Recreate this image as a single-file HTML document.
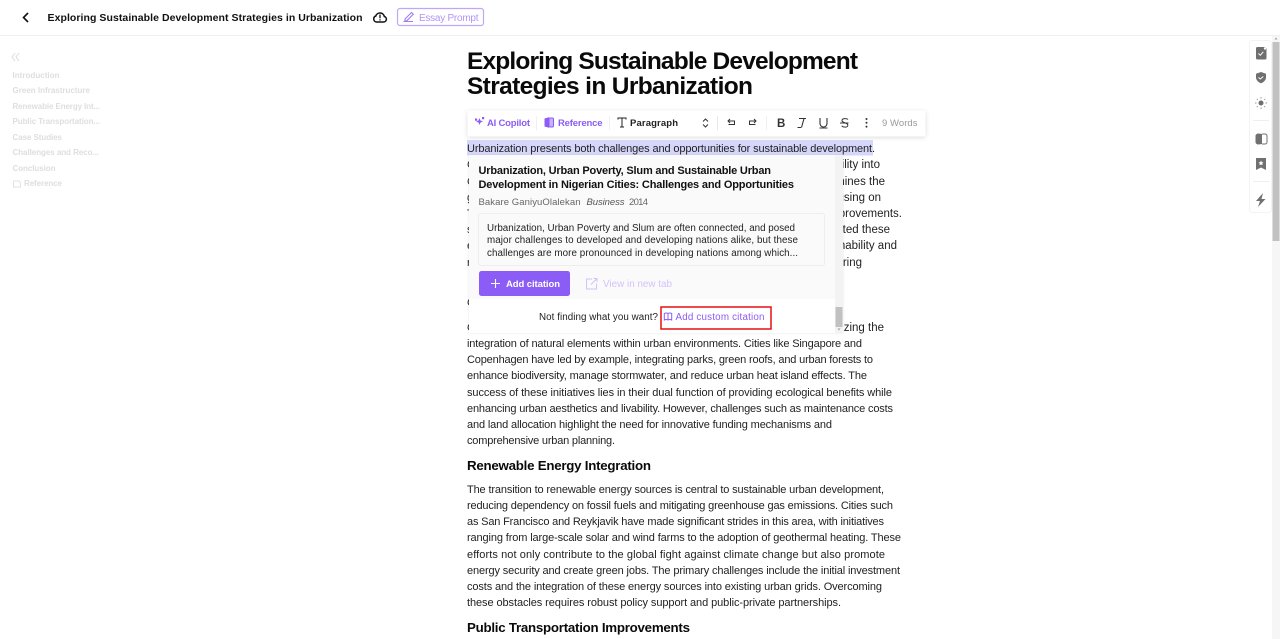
<!DOCTYPE html>
<html><head><meta charset="utf-8"><style>
html,body{margin:0;padding:0;background:#fff;overflow:hidden}
svg{display:block}
text{font-family:"Liberation Sans",sans-serif;white-space:pre}
.b{font-size:11px;fill:#1f1f1f}
.f{font-size:11.500px;fill:#1f1f1f}
.h{font-size:13.300px;font-weight:700;fill:#0a0a0a}
.t{font-size:24.500px;font-weight:700;fill:#0a0a0a}
.s{font-size:8px;font-weight:700;fill:#dedede}
.p{fill:#8b5cf6}
</style></head><body>
<svg width="1280" height="639" viewBox="0 0 1280 639" xmlns="http://www.w3.org/2000/svg">
<defs><filter id="sh" x="-10%" y="-40%" width="120%" height="200%"><feDropShadow dx="0" dy="1" stdDeviation="2.500" flood-color="#000" flood-opacity=".14"/></filter>
<filter id="sh2" x="-10%" y="-10%" width="120%" height="120%"><feDropShadow dx="0" dy="0" stdDeviation="1.200" flood-color="#000" flood-opacity=".10"/></filter></defs>
<rect width="1280" height="639" fill="#fff"/>
<rect y="35" width="1280" height="1" fill="#f0f0f0"/>
<!-- header -->
<path d="M28 13l-4.500 4.500 4.500 4.500" fill="none" stroke="#111" stroke-width="1.600"/>
<text x="47.500" y="21" font-size="10.500px" font-weight="700" fill="#111" textLength="315" lengthAdjust="spacing">Exploring Sustainable Development Strategies in Urbanization</text>
<path d="M376.500 22h7a2.800 2.800 0 0 0 .8-5.500 4.400 4.400 0 0 0-8.500-.5 3.100 3.100 0 0 0 .7 6z" fill="none" stroke="#111" stroke-width="1.500"/>
<path d="M380 14.500v3.800M380 19.200v1.300" stroke="#111" stroke-width="1.300"/>
<rect x="397.500" y="8.500" width="86" height="17" rx="2.500" fill="#fff" stroke="#bfa6fb" stroke-width="1.200"/>
<path d="M403.500 21.500h9.500M405 19l6.500-6.500 1.800 1.800-6.500 6.500h-1.800z" fill="none" stroke="#a27cf8" stroke-width="1.100"/>
<text x="419" y="21" font-size="10px" fill="#b295f9" textLength="59.500" lengthAdjust="spacing">Essay Prompt</text>
<!-- sidebar -->
<path d="M15 53l-3 4 3 4M19 53l-3 4 3 4" fill="none" stroke="#dcdcdc" stroke-width="1"/>
<text class="s" x="12.500" y="78" textLength="47" lengthAdjust="spacing">Introduction</text>
<text class="s" x="12.500" y="93" textLength="77.500" lengthAdjust="spacing">Green Infrastructure</text>
<text class="s" x="12.500" y="109" textLength="87.500" lengthAdjust="spacing">Renewable Energy Int...</text>
<text class="s" x="12.500" y="124" textLength="87.500" lengthAdjust="spacing">Public Transportation...</text>
<text class="s" x="12.500" y="140" textLength="49.500" lengthAdjust="spacing">Case Studies</text>
<text class="s" x="12.500" y="155" textLength="86.500" lengthAdjust="spacing">Challenges and Reco...</text>
<text class="s" x="12.500" y="171" textLength="43" lengthAdjust="spacing">Conclusion</text>
<path d="M14 181h5l1.500 2v4h-7v-5z" fill="none" stroke="#e2e2e2"/>
<text class="s" x="24" y="186" textLength="38" lengthAdjust="spacing">Reference</text>
<!-- title -->
<text class="t" x="467" y="69" textLength="391" lengthAdjust="spacing">Exploring Sustainable Development</text>
<text class="t" x="467" y="94" textLength="286" lengthAdjust="spacing">Strategies in Urbanization</text>
<!-- toolbar -->
<rect x="467.500" y="110.500" width="458" height="26" rx="2" fill="#fff" filter="url(#sh)"/>
<path d="M479.500 118l1 2.500 2.500 1-2.500 1-1 2.500-1-2.500-2.500-1 2.500-1zM475 118.500h2.200v2.200h-2.200zM482 117h2.200v2.200h-2.200z" class="p"/>
<text x="487" y="126" font-size="9.500px" font-weight="700" class="p" textLength="43" lengthAdjust="spacing">AI Copilot</text>
<rect x="536" y="116" width="1" height="14" fill="#f0f0f0"/>
<path d="M544.500 118.500l4.500-1.200v10.400l-4.500-1.200z" class="p"/><rect x="549" y="118" width="4.500" height="9" rx="1" fill="#c8b2fb" stroke="#8b5cf6"/>
<text x="558" y="126" font-size="9.500px" font-weight="700" class="p" textLength="44.500" lengthAdjust="spacing">Reference</text>
<rect x="609" y="116" width="1" height="14" fill="#f0f0f0"/>
<path d="M618 119.500v-1.500h8v1.500M622 118v9M620 127h4" fill="none" stroke="#222" stroke-width="1"/>
<text x="630" y="126" font-size="9.500px" font-weight="700" fill="#222" textLength="48" lengthAdjust="spacing">Paragraph</text>
<path d="M703 121.500l2.500-2.500 2.500 2.500M703 124.500l2.500 2.500 2.500-2.500" fill="none" stroke="#333" stroke-width="1"/>
<rect x="717" y="116" width="1" height="14" fill="#e8e8e8"/>
<path d="M730 119l-2 2 2 2M728 121h6.500v3.500h-6" fill="none" stroke="#333" stroke-width="1"/>
<path d="M754 119l2 2-2 2M756 121h-6.500v3.500h6" fill="none" stroke="#333" stroke-width="1"/>
<rect x="766" y="116" width="1" height="14" fill="#f0f0f0"/>
<text x="777" y="127" font-size="11.500px" font-weight="700" fill="#333" textLength="8" lengthAdjust="spacing">B</text>
<path d="M799 118.500h7M801 127.500h-3.500M805.500 118.500h-1.500l-2.500 9" fill="none" stroke="#333" stroke-width="1.100"/>
<path d="M820 118v5.500a3.400 3.400 0 0 0 7 0V118M819.500 128h8" fill="none" stroke="#333" stroke-width="1.100"/>
<path d="M848 119.500c-1-1-5.500-1.500-6 .8-.3 1.500 1.500 2 3.500 2.700 2 .7 2.700 1.500 2.200 3-.6 1.500-4.500 1.500-6-.2M840 123h8.500" fill="none" stroke="#333" stroke-width="1"/>
<circle cx="866.500" cy="119" r="1" fill="#333"/><circle cx="866.500" cy="122.800" r="1" fill="#333"/><circle cx="866.500" cy="126.600" r="1" fill="#333"/>
<text x="882" y="126" font-size="9.500px" fill="#9a9a9a" textLength="35.500" lengthAdjust="spacing">9 Words</text>
<!-- selected -->
<rect x="467" y="140" width="406" height="15.500" fill="#d6d6fb"/>
<text class="b" x="467" y="152" textLength="408" lengthAdjust="spacing">Urbanization presents both challenges and opportunities for sustainable development.</text>
<!-- left fragments / right fragments -->
<text class="b" x="467" y="168">C</text><text class="b" x="467" y="185">C</text><text class="b" x="467" y="201">g</text><text class="b" x="467" y="217">T</text><text class="b" x="467" y="233">s</text><text class="b" x="467" y="249">e</text><text class="b" x="467" y="266">n</text><text class="b" x="467" y="306">G</text><text class="b" x="467" y="331">G</text>
<text class="f" x="880" y="168" text-anchor="end">ility into</text>
<text class="f" x="885" y="185" text-anchor="end">mines the</text>
<text class="f" x="881" y="201" text-anchor="end">using on</text>
<text class="f" x="902" y="217" text-anchor="end">provements.</text>
<text class="f" x="890" y="233" text-anchor="end">ated these</text>
<text class="f" x="897" y="249" text-anchor="end">nability and</text>
<text class="f" x="862" y="266" text-anchor="end">ring</text>
<text class="f" x="884" y="331" text-anchor="end">izing the</text>
<!-- popup -->
<rect x="469" y="155" width="374" height="178" fill="#fff" filter="url(#sh2)"/>
<rect x="469" y="155" width="366" height="144" fill="#fafafa"/>
<rect x="835" y="155" width="8" height="178" fill="#f3f3f3"/>
<rect x="835.500" y="307" width="7" height="20" fill="#c1c1c1"/>
<path d="M837.500 330.500h3l-1.500-2z" fill="#a3a3a3" transform="rotate(180 839 329.500)"/>
<text x="478.500" y="174" font-size="11px" font-weight="700" fill="#111" textLength="292.500" lengthAdjust="spacing">Urbanization, Urban Poverty, Slum and Sustainable Urban</text>
<text x="478.500" y="188" font-size="11px" font-weight="700" fill="#111" textLength="315.500" lengthAdjust="spacing">Development in Nigerian Cities: Challenges and Opportunities</text>
<text x="478.500" y="205" font-size="9.500px" fill="#666" textLength="102" lengthAdjust="spacing">Bakare GaniyuOlalekan</text>
<text x="586.500" y="205" font-size="9.500px" font-style="italic" fill="#555" textLength="38" lengthAdjust="spacing">Business</text>
<text x="629" y="205" font-size="9.500px" fill="#666" textLength="19" lengthAdjust="spacing">2014</text>
<rect x="478.500" y="213.500" width="346" height="52" rx="2" fill="#fafafa" stroke="#eee"/>
<text x="487" y="231" font-size="9.800px" fill="#222" textLength="308" lengthAdjust="spacing">Urbanization, Urban Poverty and Slum are often connected, and posed</text>
<text x="487" y="243" font-size="9.800px" fill="#222" textLength="311" lengthAdjust="spacing">major challenges to developed and developing nations alike, but these</text>
<text x="487" y="256" font-size="9.800px" fill="#222" textLength="311" lengthAdjust="spacing">challenges are more pronounced in developing nations among which...</text>
<rect x="479" y="271" width="91" height="25" rx="2.500" fill="#8b5cf6"/>
<path d="M491 283.500h9M495.500 279v9" stroke="#fff" stroke-width="1.100"/>
<text x="506" y="287" font-size="9.500px" font-weight="700" fill="#fff" textLength="54" lengthAdjust="spacing">Add citation</text>
<path d="M592 279h-5.500v10h10v-5.500M591 284.500l6-6M593.500 278.500h3.500v3.500" fill="none" stroke="#d3c2fb" stroke-width="1"/>
<text x="603" y="287" font-size="9.800px" fill="#d3c2fb" textLength="69" lengthAdjust="spacing">View in new tab</text>
<text x="539" y="320" font-size="9.800px" fill="#222" textLength="119" lengthAdjust="spacing">Not finding what you want?</text>
<rect x="661" y="307" width="110" height="22" fill="none" stroke="#e51010" stroke-width="1.500"/>
<path d="M668 313.500c-.8-.5-2.500-.5-3.700 0v6.500c1.200-.5 2.900-.5 3.700 0 .8-.5 2.500-.5 3.700 0v-6.500c-1.200-.5-2.900-.5-3.700 0zv6.500" fill="none" stroke="#8b5cf6" stroke-width="1"/>
<text x="675.500" y="320" font-size="9.800px" fill="#8b5cf6" textLength="89" lengthAdjust="spacing">Add custom citation</text>
<!-- body -->
<text class="b" x="467" y="347" textLength="395" lengthAdjust="spacing">integration of natural elements within urban environments. Cities like Singapore and</text>
<text class="b" x="467" y="363" textLength="406" lengthAdjust="spacing">Copenhagen have led by example, integrating parks, green roofs, and urban forests to</text>
<text class="b" x="467" y="379" textLength="400" lengthAdjust="spacing">enhance biodiversity, manage stormwater, and reduce urban heat island effects. The</text>
<text class="b" x="467" y="396" textLength="425" lengthAdjust="spacing">success of these initiatives lies in their dual function of providing ecological benefits while</text>
<text class="b" x="467" y="412" textLength="426" lengthAdjust="spacing">enhancing urban aesthetics and livability. However, challenges such as maintenance costs</text>
<text class="b" x="467" y="428" textLength="365" lengthAdjust="spacing">and land allocation highlight the need for innovative funding mechanisms and</text>
<text class="b" x="467" y="444" textLength="148" lengthAdjust="spacing">comprehensive urban planning.</text>
<text class="h" x="467" y="470" textLength="184" lengthAdjust="spacing">Renewable Energy Integration</text>
<text class="b" x="467" y="493" textLength="417" lengthAdjust="spacing">The transition to renewable energy sources is central to sustainable urban development,</text>
<text class="b" x="467" y="509" textLength="426" lengthAdjust="spacing">reducing dependency on fossil fuels and mitigating greenhouse gas emissions. Cities such</text>
<text class="b" x="467" y="525" textLength="417" lengthAdjust="spacing">as San Francisco and Reykjavik have made significant strides in this area, with initiatives</text>
<text class="b" x="467" y="541" textLength="434" lengthAdjust="spacing">ranging from large-scale solar and wind farms to the adoption of geothermal heating. These</text>
<text class="b" x="467" y="558" textLength="418" lengthAdjust="spacing">efforts not only contribute to the global fight against climate change but also promote</text>
<text class="b" x="467" y="574" textLength="433" lengthAdjust="spacing">energy security and create green jobs. The primary challenges include the initial investment</text>
<text class="b" x="467" y="590" textLength="415" lengthAdjust="spacing">costs and the integration of these energy sources into existing urban grids. Overcoming</text>
<text class="b" x="467" y="606" textLength="374" lengthAdjust="spacing">these obstacles requires robust policy support and public-private partnerships.</text>
<text class="h" x="467" y="632" textLength="223" lengthAdjust="spacing">Public Transportation Improvements</text>
<!-- right rail -->
<rect x="1249.500" y="40.500" width="22" height="172" rx="3" fill="#fff" stroke="#f3f3f3"/>
<path d="M1257.500 47h7.500l1.500 1.500v9.500a1.500 1.500 0 0 1-1.500 1.500h-7.500a1.500 1.500 0 0 1-1.500-1.500v-9.500a1.500 1.500 0 0 1 1.500-1.500z" fill="#6f6f6f"/><path d="M1258.500 53.500l1.800 1.800 3-3.500" fill="none" stroke="#fff" stroke-width="1"/><circle cx="1265" cy="48.500" r="1.200" fill="#fff"/>
<path d="M1261 72l5 1.800v3.500c0 3-2.500 5-5 6-2.500-1-5-3-5-6v-3.500z" fill="#6f6f6f"/><path d="M1258.500 77.500l1.800 1.500 3-2.500" fill="none" stroke="#fff" stroke-width="1"/>
<circle cx="1261" cy="103" r="2.500" fill="#6f6f6f"/><path d="M1261 97v1.500M1261 107.500v1.500M1255 103h1.500M1265.500 103h1.500M1256.800 98.800l1 1M1264.200 106.200l1 1M1265.200 98.800l-1 1M1257.800 106.200l-1 1" stroke="#9a9a9a" stroke-width="1"/>
<rect x="1253" y="120" width="16" height="1" fill="#eee"/>
<path d="M1262 134v10l-3.500 0.500c-1.500 0-3-1-3-2.500v-6c0-1.500 1.500-2.500 3-2.500z" fill="#707070"/><path d="M1262 134h3c1 0 2 .8 2 2v6c0 1.200-1 2-2 2h-3" fill="none" stroke="#707070" stroke-width="1"/>
<path d="M1256 158h10v12l-5-2.500-5 2.500z" fill="#707070"/><path d="M1261 160.500l.8 1.700 1.700.2-1.300 1.200.4 1.700-1.600-.8-1.600.8.4-1.700-1.300-1.200 1.700-.2z" fill="#fff"/>
<rect x="1253" y="181" width="16" height="1" fill="#eee"/>
<path d="M1263 193l-7 8h4l-2 6 7.500-8h-4z" fill="#707070"/>
<!-- scrollbar -->
<rect x="1272" y="36" width="8" height="603" fill="#f6f6f6"/>
<rect x="1272.500" y="42" width="7" height="199" fill="#c1c1c1"/>
<path d="M1274.500 39.500l1.500-2 1.500 2z" fill="#a3a3a3"/>
</svg>
</body></html>
